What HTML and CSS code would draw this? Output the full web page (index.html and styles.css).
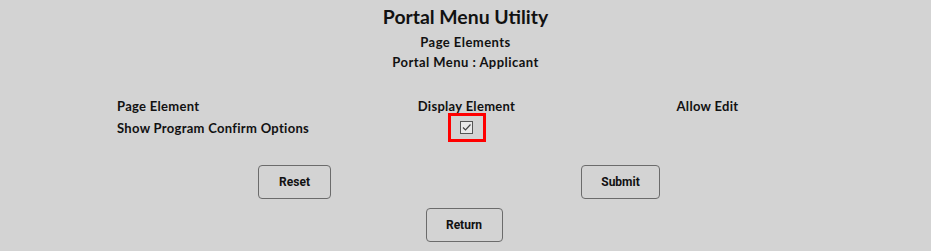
FILE: index.html
```html
<!DOCTYPE html>
<html lang="en">
<head>
    <meta charset="UTF-8">
    <title>Portal Menu Utility</title>
    <link rel="stylesheet" href="styles.css">
</head>
<body>

<div class="container">
    <h1>Portal Menu Utility</h1>
    <h2>Page Elements</h2>
    <h3>Portal Menu : Applicant</h3>

    <div class="elements">
        <div class="cell head left">Page Element</div>
        <div class="cell head">Display Element</div>
        <div class="cell head">Allow Edit</div>

        <div class="cell left">Show Program Confirm Options</div>
        <div class="cell">
            <span class="highlight">
                <span class="check">
                    <svg width="11" height="11" viewBox="0 0 11 11"><path d="M2 5.5 L4.5 8 L9.5 2.5" fill="none" stroke="#444" stroke-width="1.2"/></svg>
                </span>
            </span>
        </div>
        <div class="cell"></div>
    </div>

    <div class="actions">
        <button type="button" class="btn-reset">Reset</button>
        <button type="button" class="btn-submit">Submit</button>
    </div>
    <div class="actions single">
        <button type="button" class="btn-return">Return</button>
    </div>
</div>

</body>
</html>
```

FILE: styles.css
```css
body {
    font-family: Lato, "DejaVu Sans", sans-serif;
    background-color: #d3d3d3;
    color: #111;
    margin: 0;
    padding: 0;
}
.container {
    width: 931px;
}
h1 {
    text-align: center;
    font-size: 19.4px;
    font-weight: bold;
    margin: 0;
    padding-top: 5px;
    line-height: 24px;
}
h2, h3 {
    text-align: center;
    font-size: 13px;
    font-weight: bold;
    letter-spacing: 0.45px;
    margin: 0;
    line-height: 20px;
}
h2 {
    margin-top: 3px;
}
.elements {
    display: grid;
    grid-template-columns: 241px 241px 241px;
    margin: 23px 0 0 105px;
}
.cell {
    font-size: 13px;
    font-weight: bold;
    letter-spacing: 0.3px;
    text-align: center;
    line-height: 22px;
}
.cell.left {
    text-align: left;
    padding-left: 12px;
}
.highlight {
    display: inline-flex;
    align-items: center;
    justify-content: center;
    width: 32px;
    height: 23px;
    border: 3px solid #ff0000;
    vertical-align: top;
    margin-top: -4px;
}
.check {
    display: inline-flex;
    align-items: center;
    justify-content: center;
    width: 11px;
    height: 11px;
    border: 1px solid #555;
    background-color: #e9e9e9;
}
.actions {
    display: flex;
    margin-top: 23px;
}
.actions.single {
    justify-content: center;
    margin-top: 9px;
    padding-right: 3px;
}
button {
    font-family: Roboto, Arial, sans-serif;
    font-weight: bold;
    font-size: 12px;
    color: #111;
    background-color: #d3d3d3;
    border: 1px solid #6b6b6b;
    border-radius: 4px;
    height: 34px;
    padding: 0;
}
.btn-reset {
    width: 73px;
    margin-left: 258px;
}
.btn-submit {
    width: 79px;
    margin-left: 250px;
}
.btn-return {
    width: 77px;
}
```
